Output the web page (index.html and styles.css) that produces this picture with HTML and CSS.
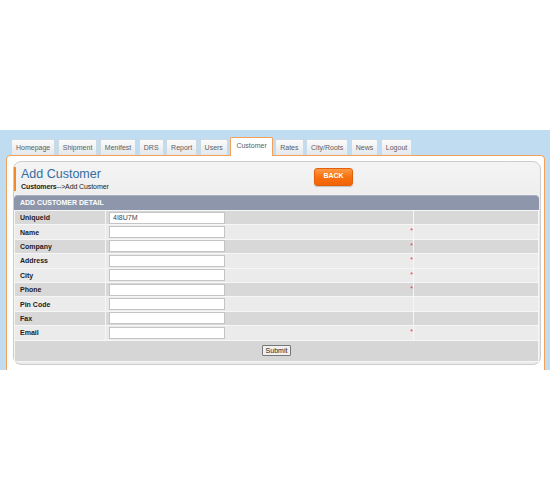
FILE: index.html
```html
<!DOCTYPE html>
<html>
<head>
<meta charset="utf-8">
<link rel="stylesheet" href="styles.css">
</head>
<body>
<div class="wrap">
  <ul class="tabs">
    <li class="tab">Homepage</li>
    <li class="tab">Shipment</li>
    <li class="tab">Menifest</li>
    <li class="tab">DRS</li>
    <li class="tab">Report</li>
    <li class="tab">Users</li>
    <li class="tab active">Customer</li>
    <li class="tab">Rates</li>
    <li class="tab">City/Roots</li>
    <li class="tab">News</li>
    <li class="tab">Logout</li>
  </ul>
  <div class="frame">
    <div class="panel">
      <div class="head">
        <div class="titles">
          <h1 class="title">Add Customer</h1>
          <div class="crumb"><b>Customers</b>--&gt;Add Customer</div>
        </div>
        <button class="back">BACK</button>
      </div>
      <div class="bar">ADD CUSTOMER DETAIL</div>
      <table class="form">
        <tr class="dark"><td class="lbl">Uniqueid</td><td class="fld"><span class="inp">4I8U7M</span></td><td class="ext"></td></tr>
        <tr class="light"><td class="lbl">Name</td><td class="fld"><span class="inp"></span><span class="req">*</span></td><td class="ext"></td></tr>
        <tr class="dark"><td class="lbl">Company</td><td class="fld"><span class="inp"></span><span class="req">*</span></td><td class="ext"></td></tr>
        <tr class="light"><td class="lbl">Address</td><td class="fld"><span class="inp"></span><span class="req">*</span></td><td class="ext"></td></tr>
        <tr class="light"><td class="lbl">City</td><td class="fld"><span class="inp"></span><span class="req">*</span></td><td class="ext"></td></tr>
        <tr class="dark"><td class="lbl">Phone</td><td class="fld"><span class="inp"></span><span class="req">*</span></td><td class="ext"></td></tr>
        <tr class="light"><td class="lbl">Pin Code</td><td class="fld"><span class="inp"></span></td><td class="ext"></td></tr>
        <tr class="dark"><td class="lbl">Fax</td><td class="fld"><span class="inp"></span></td><td class="ext"></td></tr>
        <tr class="light"><td class="lbl">Email</td><td class="fld"><span class="inp"></span><span class="req">*</span></td><td class="ext"></td></tr>
        <tr class="submit-row"><td colspan="3"><button class="submit">Submit</button></td></tr>
      </table>
    </div>
  </div>
</div>
</body>
</html>
```
FILE: styles.css
```css
html, body {
  margin: 0;
  padding: 0;
  background: #ffffff;
  font-family: "Liberation Sans", Arial, sans-serif;
}
.wrap {
  margin-top: 130px;
  height: 240px;
  overflow: hidden;
  background: #bfdcf0;
  padding: 0 5px 0 6px;
}
.tabs {
  list-style: none;
  margin: 0;
  padding: 6px 0 0 5px;
  display: flex;
  align-items: flex-end;
  gap: 2.5px;
  height: 19px;
}
.tab {
  height: 15px;
  line-height: 16px;
  padding: 0 4px;
  font-size: 7px;
  color: #5e5e5e;
  background: linear-gradient(#fbfbfb, #e4e8ec);
  border: 1px solid #cfd9e2;
  border-bottom: none;
  border-radius: 2px 2px 0 0;
}
.tab.active {
  height: 18px;
  line-height: 15px;
  background: #ffffff;
  border: 1px solid #f3a05a;
  border-bottom: none;
  position: relative;
  z-index: 1;
  margin-bottom: -1px;
  padding: 0 5px;
}
.frame {
  background: #ffffff;
  border: 1px solid #f3a05a;
  border-radius: 4px 4px 0 0;
  padding: 5px 3px 20px 6px;
}
.panel {
  background: linear-gradient(#f4f4f4, #e6e6e6 40%, #ececec);
  border: 1px solid #cccccc;
  border-radius: 8px;
  padding: 5px 1px 2px 0;
}
.head {
  display: flex;
  align-items: flex-start;
  height: 24px;
  border-left: 2px solid #f08a2c;
  margin-bottom: 4px;
}
.titles {
  width: 293px;
  padding-left: 5px;
}
.title {
  margin: 0;
  font-weight: normal;
  font-size: 12.5px;
  line-height: 15px;
  color: #356ca3;
}
.crumb {
  font-size: 7px;
  line-height: 9px;
  color: #222;
  letter-spacing: -0.1px;
}
.crumb b { font-weight: bold; }
.back {
  margin-top: 1px;
  width: 39px;
  height: 18px;
  border: 1px solid #e2600c;
  border-radius: 3px;
  background: linear-gradient(#ff9a44, #f8700f 50%, #f26308);
  color: #ffffff;
  font-family: "Liberation Sans", Arial, sans-serif;
  font-size: 7px;
  font-weight: bold;
  padding: 0 0 4px;
  box-shadow: 0 1px 1px rgba(0,0,0,0.2);
}
.bar {
  height: 14px;
  line-height: 14px;
  background: #8d96aa;
  border-top: 1px solid #a9b0bf;
  border-radius: 4px 4px 0 0;
  color: #ffffff;
  font-size: 7px;
  font-weight: bold;
  padding-left: 6px;
}
.form {
  width: 100%;
  border-collapse: separate;
  border-spacing: 1px 1.4px;
  background: #f6f6f6;
  font-size: 7px;
}
.form td {
  height: 13.4px;
  padding: 0;
  vertical-align: middle;
}
.dark td { background: #d8d8d8; }
.light td { background: #ebebeb; }
.lbl {
  width: 85px;
  padding-left: 5px !important;
  font-weight: bold;
  color: #222;
}
.fld {
  width: 307px;
  position: relative;
}
.inp {
  display: block;
  margin-left: 3px;
  width: 111px;
  height: 10px;
  line-height: 10px;
  background: #ffffff;
  border: 1px solid #c4c4c4;
  padding-left: 3px;
  color: #444;
  font-size: 7px;
}
.req {
  position: absolute;
  right: 0;
  top: 2px;
  color: #e8344a;
  font-size: 7px;
}
.submit-row td {
  background: #d6d6d6;
  height: 20px;
  text-align: center;
}
.submit {
  font-family: "Liberation Sans", Arial, sans-serif;
  font-size: 7px;
  height: 11px;
  padding: 0 3px;
  line-height: 9px;
  background: #f0f0f0;
  border: 1px solid #777;
  border-radius: 1px;
  color: #222;
}
```
